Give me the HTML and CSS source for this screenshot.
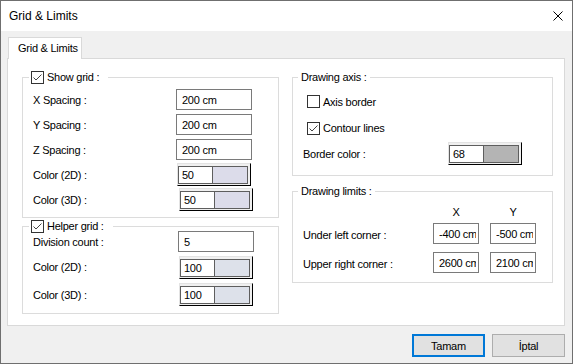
FILE: index.html
```html
<!DOCTYPE html>
<html>
<head>
<meta charset="utf-8">
<link rel="stylesheet" href="styles.css">
</head>
<body>
<div class="window">
  <div class="titlebar">
    <span class="title">Grid &amp; Limits</span>
    <svg class="close" width="10" height="10" viewBox="0 0 10 10"><path d="M0.5 0.5 L9.5 9.5 M9.5 0.5 L0.5 9.5" stroke="#000" stroke-width="1" fill="none"/></svg>
  </div>
  <div class="content">
    <div class="tabs"><div class="tab">Grid &amp; Limits</div></div>
    <div class="panel">
      <div class="col col-left">
        <div class="group">
          <div class="legend legend-show">
            <span class="cb checked"><svg width="11" height="11" viewBox="0 0 11 11"><path d="M1.5 5.5 L4 8 L9.5 2.5" stroke="#444" stroke-width="1" fill="none"/></svg></span>
            <span>Show grid :</span>
          </div>
          <div class="grid-left rows-show">
            <span>X Spacing :</span><input class="field" type="text" value="200 cm">
            <span>Y Spacing :</span><input class="field" type="text" value="200 cm">
            <span>Z Spacing :</span><input class="field" type="text" value="200 cm">
            <span>Color (2D) :</span>
            <div class="color c2d"><div class="color-in"><span class="val">50</span><span class="swatch sw-lav"></span></div></div>
            <span>Color (3D) :</span>
            <div class="color c3d"><div class="color-in"><span class="val">50</span><span class="swatch sw-lav"></span></div></div>
          </div>
        </div>
        <div class="group group-helper">
          <div class="legend legend-helper">
            <span class="cb checked"><svg width="11" height="11" viewBox="0 0 11 11"><path d="M1.5 5.5 L4 8 L9.5 2.5" stroke="#444" stroke-width="1" fill="none"/></svg></span>
            <span>Helper grid :</span>
          </div>
          <div class="grid-left rows-helper">
            <span>Division count :</span><input class="field f-div" type="text" value="5">
            <span>Color (2D) :</span>
            <div class="color c3d"><div class="color-in"><span class="val">100</span><span class="swatch sw-blue"></span></div></div>
            <span>Color (3D) :</span>
            <div class="color c3d"><div class="color-in"><span class="val">100</span><span class="swatch sw-blue"></span></div></div>
          </div>
        </div>
      </div>
      <div class="col col-right">
        <div class="group">
          <div class="legend legend-text">Drawing axis :</div>
          <div class="axis-rows">
            <div class="check-row"><span class="cb"></span><span>Axis border</span></div>
            <div class="check-row row-contour"><span class="cb checked"><svg width="11" height="11" viewBox="0 0 11 11"><path d="M1.5 5.5 L4 8 L9.5 2.5" stroke="#444" stroke-width="1" fill="none"/></svg></span><span>Contour lines</span></div>
            <div class="border-row"><span class="bc-label">Border color :</span>
              <div class="color"><div class="color-in"><span class="val">68</span><span class="swatch sw-gray"></span></div></div>
            </div>
          </div>
        </div>
        <div class="group group-limits">
          <div class="legend legend-text">Drawing limits :</div>
          <div class="limits-grid">
            <span></span><span class="hdr">X</span><span class="hdr">Y</span>
            <span class="lim-label">Under left corner :</span>
            <input class="field small" type="text" value="-400 cm">
            <input class="field small" type="text" value="-500 cm">
            <span class="lim-label">Upper right corner :</span>
            <input class="field small" type="text" value="2600 cm">
            <input class="field small" type="text" value="2100 cm">
          </div>
        </div>
      </div>
    </div>
    <div class="buttons">
      <button class="btn primary">Tamam</button>
      <button class="btn">İptal</button>
    </div>
  </div>
</div>
</body>
</html>
```
FILE: styles.css
```css
* { box-sizing: border-box; }
html, body { margin: 0; padding: 0; }
body {
  width: 573px;
  height: 364px;
  font-family: "Liberation Sans", Arial, sans-serif;
  font-size: 11px;
  letter-spacing: -0.25px;
  color: #000;
  background: #f0f0f0;
}
.window {
  width: 573px;
  height: 364px;
  border: 1px solid #6f6f6f;
  background: #f0f0f0;
  display: flex;
  flex-direction: column;
}
.titlebar {
  height: 30px;
  flex: none;
  background: #fff;
  display: flex;
  align-items: center;
  justify-content: space-between;
  padding: 0 9px 0 8px;
}
.title { font-size: 12px; letter-spacing: 0; }
.close { display: block; }

.content {
  flex: 1;
  display: flex;
  flex-direction: column;
  padding: 6px 7px 0 6px;
}
.tabs { display: flex; padding-left: 1px; }
.tab {
  width: 74px;
  height: 22px;
  line-height: 21px;
  padding: 0 0 0 9px;
  border: 1px solid #d9d9d9;
  border-bottom: none;
  background: #fff;
  margin-bottom: -1px;
  position: relative;
  z-index: 1;
  white-space: nowrap;
}
.panel {
  height: 268px;
  flex: none;
  border: 1px solid #d9d9d9;
  background: #fff;
  display: flex;
  gap: 13px;
  padding: 18px 10px 0 14px;
}
.col { display: flex; flex-direction: column; }
.col-left { width: 257px; }
.col-right { width: 261px; }

.group { border: 1px solid #dcdcdc; }
.group-helper { margin-top: 8px; }
.group-limits { margin-top: 15px; }

.legend {
  display: flex;
  align-items: center;
  gap: 3px;
  height: 15px;
  line-height: 15px;
  margin-top: -8px;
  margin-left: 6px;
  width: fit-content;
  background: #fff;
  padding: 0 9px 0 2px;
}
.legend-text { padding: 0 3px; margin-left: 5px; }

.cb {
  width: 13px;
  height: 13px;
  border: 1px solid #333;
  background: #fff;
  display: inline-block;
  flex: none;
}
.cb svg { display: block; }

.grid-left {
  display: grid;
  grid-template-columns: 143px 76px;
  align-items: center;
  padding-left: 10px;
}
.rows-show {
  grid-template-rows: repeat(5, 25px);
  margin-top: 2px;
  padding-bottom: 5px;
}
.rows-helper {
  grid-template-rows: 25px 26px 29px;
  margin-top: -5px;
  padding-bottom: 4px;
}

.field {
  font: inherit;
  letter-spacing: inherit;
  color: #000;
  height: 21px;
  width: 76px;
  border: 1px solid #7a7a7a;
  background: #fff;
  padding: 0 2px 0 5px;
  margin: 0;
  outline: none;
}
.f-div { margin-left: 2px; }
.field.small { width: 46px; min-width: 0; }

.color {
  width: 74px;
  height: 23px;
  border: 1px solid;
  border-color: #e3e3e3 #000 #000 #e3e3e3;
  background: #f0f0f0;
  padding: 2px 2px 1px 0;
}
.c2d { margin-left: 1px; }
.c3d { margin-left: 3px; }
.color-in {
  height: 100%;
  border: 1px solid #5e5e5e;
  display: flex;
  background: #fff;
}
.val {
  width: 33px;
  padding-left: 3px;
  line-height: 16px;
  background: #fff;
}
.swatch { flex: 1; border-left: 1px solid #5e5e5e; }
.sw-lav { background: #dcdcea; }
.sw-blue { background: #dde1ea; }
.sw-gray { background: #b4b4b4; }

.axis-rows {
  margin-top: 3px;
  padding-bottom: 9px;
}
.check-row {
  display: flex;
  align-items: center;
  gap: 3px;
  height: 27px;
  padding-left: 14px;
}
.row-contour { height: 26px; }
.border-row {
  display: flex;
  align-items: center;
  height: 25px;
  padding-left: 10px;
}
.bc-label { width: 145px; }

.limits-grid {
  display: grid;
  grid-template-columns: 119px 46px 46px;
  grid-template-rows: 14px 29px 29px;
  column-gap: 11px;
  align-items: center;
  padding-left: 10px;
  margin-top: 6px;
  padding-bottom: 5px;
}
.hdr { justify-self: center; }
.lim-label { padding-top: 3px; white-space: nowrap; }

.buttons {
  display: flex;
  justify-content: flex-end;
  gap: 7px;
  margin-top: 8px;
}
.btn {
  font: inherit;
  letter-spacing: inherit;
  color: #000;
  width: 73px;
  height: 23px;
  background: #e1e1e1;
  border: 1px solid #adadad;
  padding: 0;
  margin: 0;
}
.btn.primary { border: 2px solid #0078d7; }
```
